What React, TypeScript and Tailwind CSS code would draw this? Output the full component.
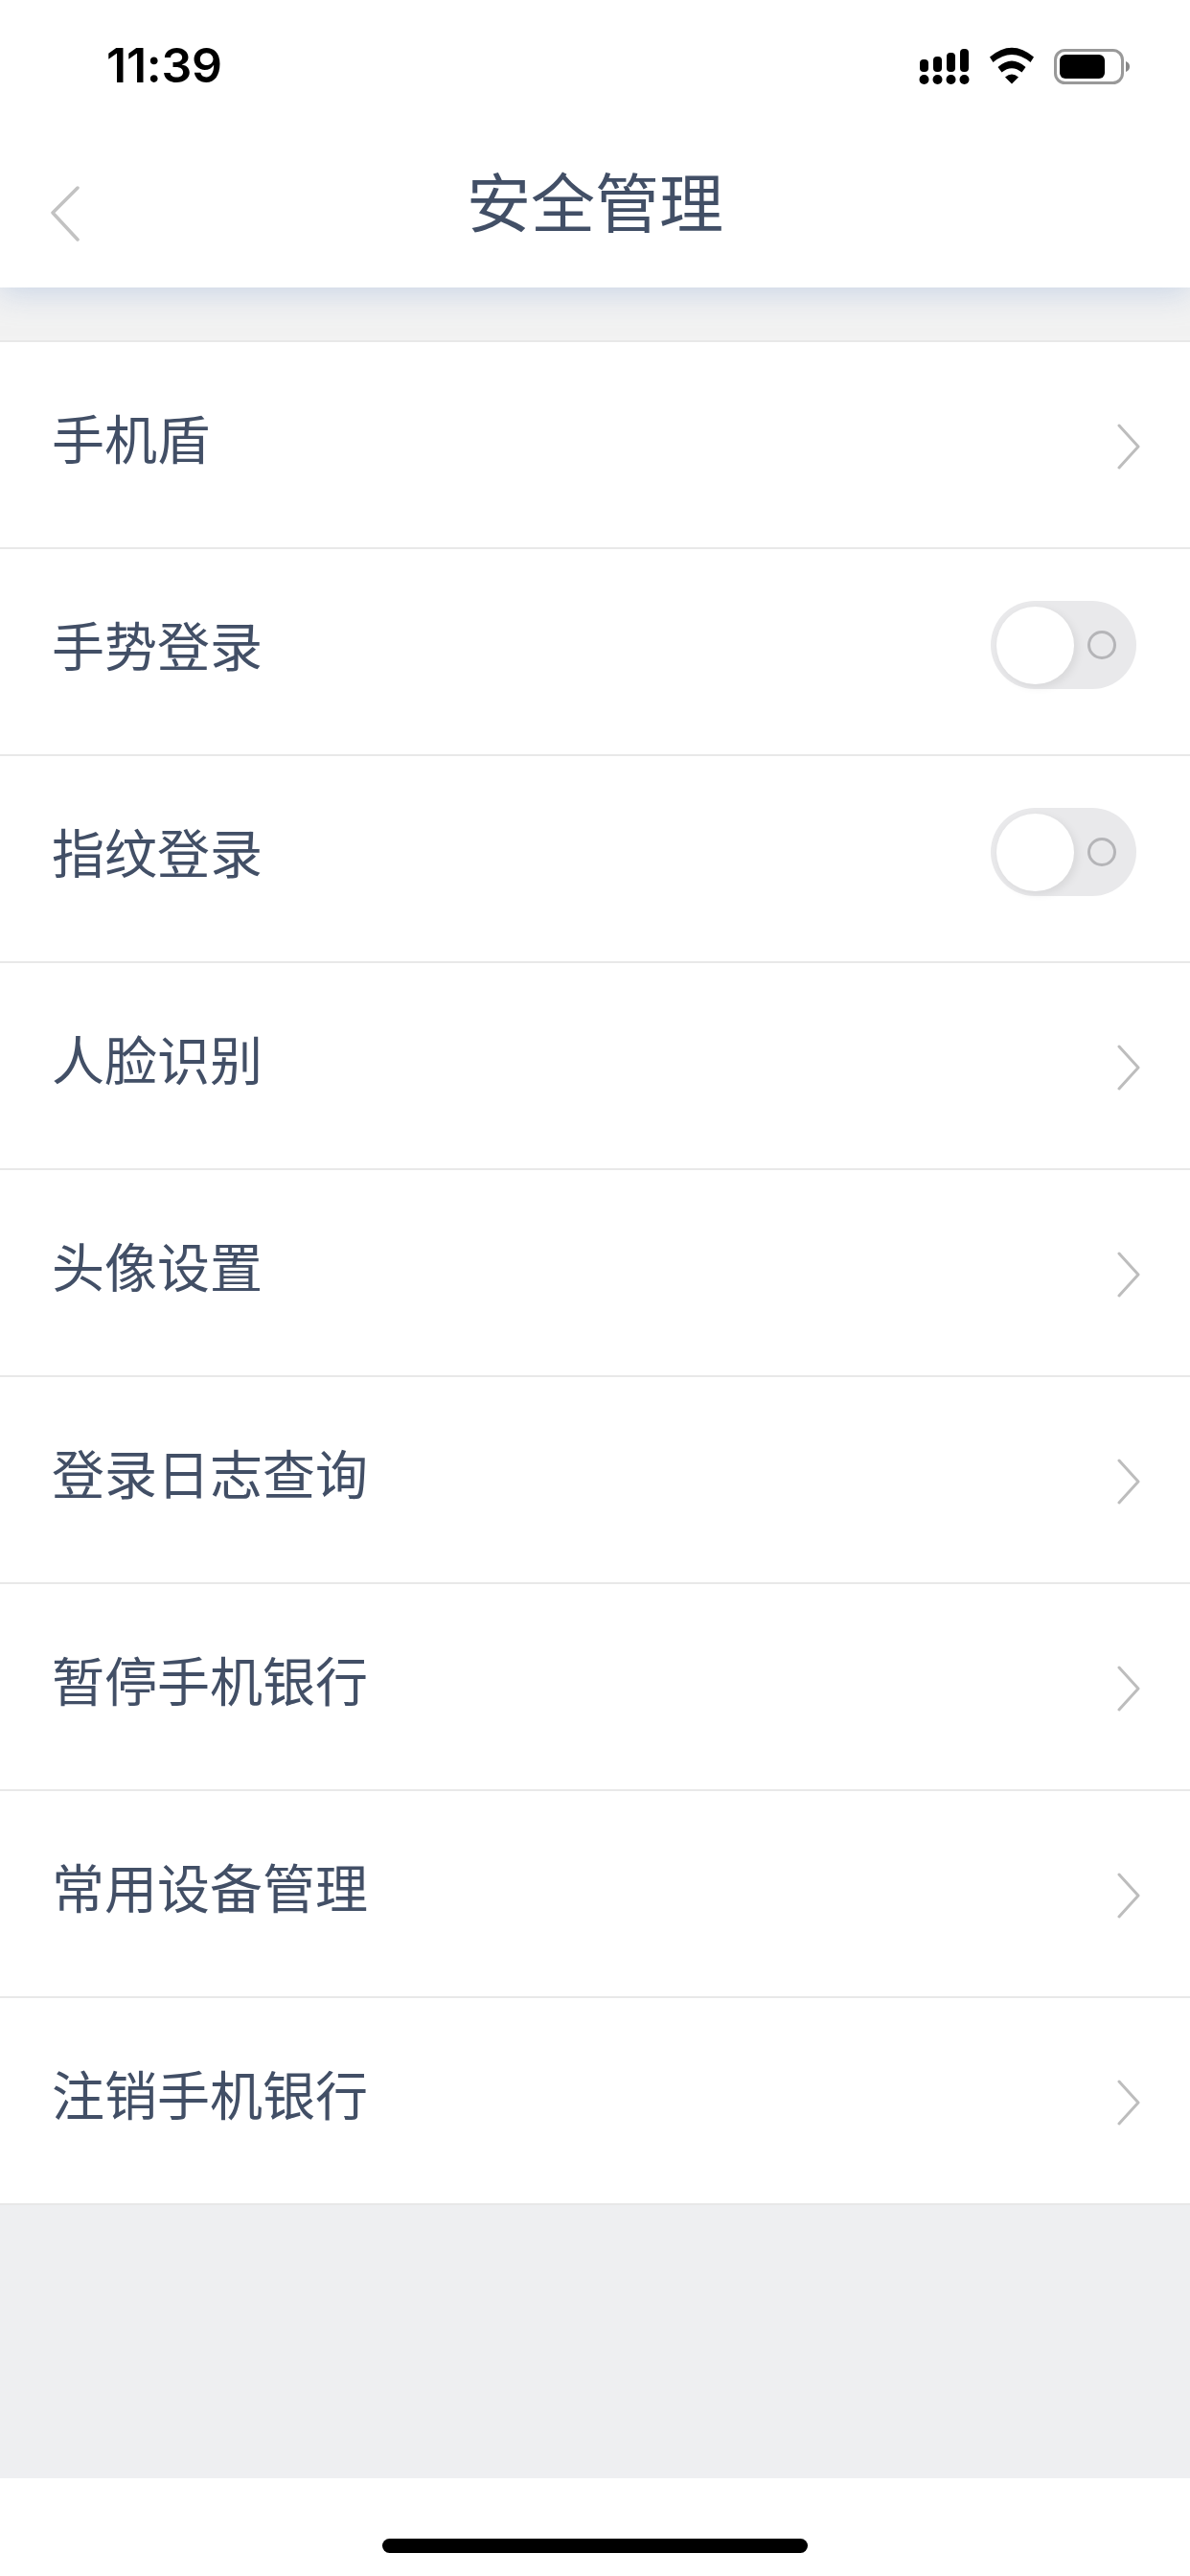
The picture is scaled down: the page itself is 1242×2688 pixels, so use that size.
import * as React from "react"

type Row = { label: string; toggle?: boolean }

const rows: Row[] = [
  { label: "手机盾" },
  { label: "手势登录", toggle: true },
  { label: "指纹登录", toggle: true },
  { label: "人脸识别" },
  { label: "头像设置" },
  { label: "登录日志查询" },
  { label: "暂停手机银行" },
  { label: "常用设备管理" },
  { label: "注销手机银行" },
]

function StatusIcons() {
  return (
    <svg width="222" height="40" viewBox="0 0 222 40" fill="none">
      {/* signal */}
      <rect x="3" y="14" width="9" height="13" rx="4" fill="#000" />
      <rect x="17" y="11" width="9" height="16" rx="4" fill="#000" />
      <rect x="31" y="7" width="9" height="20" rx="4" fill="#000" />
      <rect x="45" y="3" width="9" height="24" rx="4" fill="#000" />
      <circle cx="7.5" cy="35" r="5" fill="#000" />
      <circle cx="21.5" cy="35" r="5" fill="#000" />
      <circle cx="35.5" cy="35" r="5" fill="#000" />
      <circle cx="49.5" cy="35" r="5" fill="#000" />
      {/* wifi */}
      <path d="M76 11.5 Q99 -8 122 11.5 L118.500 17 Q99 1 79.500 17 Z" fill="#000" />
      <path d="M84.500 22 Q99 9 113.500 22 L109.500 27.500 Q99 19 88.500 27.500 Z" fill="#000" />
      <path d="M92 32.500 Q99 26.500 106 32.500 L99 39.500 Z" fill="#000" />
      {/* battery */}
      <rect x="144.500" y="4.500" width="70" height="34" rx="10" stroke="#999" strokeWidth="3" />
      <rect x="149" y="9" width="47" height="25" rx="6" fill="#000" />
      <path d="M218 16 C221 17 222 19 222 21.500 C222 24 221 26 218 27 Z" fill="#888" />
    </svg>
  )
}

function Chevron() {
  return (
    <svg width="24" height="48" viewBox="0 0 24 48" fill="none">
      <path d="M2 2 L22 24 L2 46" stroke="#bdbdbd" strokeWidth="3" strokeLinecap="round" strokeLinejoin="round" />
    </svg>
  )
}

function Toggle() {
  return (
    <div className="relative flex h-[92px] w-[152px] items-center rounded-full bg-[#e9e9eb] pl-[6px]">
      <div className="h-[81px] w-[81px] rounded-full bg-white shadow-[3px_3px_10px_rgba(0,0,0,0.08)]" />
      <div className="ml-[14px] h-[30px] w-[30px] rounded-full border-[3px] border-[#b5b5b8]" />
    </div>
  )
}

export default function App() {
  return (
    <div
      className="flex h-[2688px] w-[1242px] flex-col bg-white"
      style={{ fontFamily: '"Noto Sans CJK SC", "Noto Sans", sans-serif' }}
    >
      <div className="relative z-10 flex h-[300px] flex-col bg-white shadow-[0_6px_30px_rgba(170,190,220,0.55)]">
        <div className="flex h-[136px] items-center justify-between pl-[111px] pr-[63px]">
          <span className="font-['Inter',sans-serif] text-[50px] font-semibold leading-none tracking-[-0.25px] text-black">
            11:39
          </span>
          <StatusIcons />
        </div>
        <div className="relative flex flex-1 items-center justify-center pb-[21px]">
          <svg className="absolute left-[52px] top-[58px]" width="32" height="58" viewBox="0 0 32 58" fill="none">
            <path d="M29 2 L3 28 L29 56" stroke="#c2c2c2" strokeWidth="3.500" strokeLinecap="round" strokeLinejoin="round" />
          </svg>
          <h1 className="text-[67px] font-normal leading-none text-[#424f66]">安全管理</h1>
        </div>
      </div>

      <div className="h-[57px] border-b-2 border-[#e8e8e8] bg-[#f2f2f2]" />

      <div className="flex flex-col">
        {rows.map((row) => (
          <div
            key={row.label}
            className="flex h-[216px] items-center justify-between border-b-2 border-[#e8e8e8] bg-white pl-[54px]"
          >
            <span className="pb-[18px] text-[55px] leading-none text-[#424f66]">{row.label}</span>
            {row.toggle ? (
              <div className="mb-[14px] mr-[56px]">
                <Toggle />
              </div>
            ) : (
              <div className="mr-[52px] mt-[4px]">
                <Chevron />
              </div>
            )}
          </div>
        ))}
      </div>

      <div className="flex-1 bg-[#eeeff1]" />

      <div className="flex h-[102px] justify-center bg-white pt-[63px]">
        <div className="h-[15px] w-[444px] rounded-full bg-black" />
      </div>
    </div>
  )
}
